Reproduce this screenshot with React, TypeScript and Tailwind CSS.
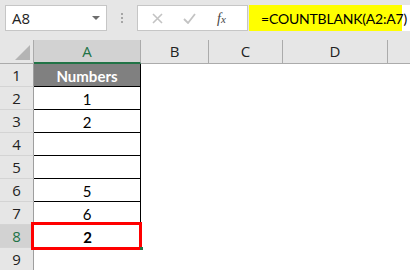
import React from 'react';

const rows = [
  { n: 1, v: 'Numbers', head: true },
  { n: 2, v: '1' },
  { n: 3, v: '2' },
  { n: 4, v: '' },
  { n: 5, v: '' },
  { n: 6, v: '5' },
  { n: 7, v: '6' },
];

const uiFont = { fontFamily: '"Open Sans", "Noto Sans", sans-serif' };
const cellFont = { fontFamily: 'Lato, "Liberation Sans", sans-serif' };

function RowHeader({ n, selected }: { n: number; selected?: boolean }) {
  return (
    <div
      className={`w-[34px] h-full flex items-center justify-center border-r border-b border-r-[#9e9e9e] border-b-[#d4d4d4] text-[15px] ${
        selected ? 'bg-[#d2d2d2] text-[#217346]' : 'bg-[#e6e6e6] text-[#222]'
      }`}
      style={uiFont}
    >
      {n}
    </div>
  );
}

export default function App() {
  return (
    <div className="w-[410px] h-[270px] overflow-hidden bg-white">
      {/* Formula bar */}
      <div className="h-[40px] bg-[#e6e6e6] flex items-start pt-[5px] pl-[5px]">
        <div className="w-[102px] h-[26px] bg-white border border-[#c6c6c6] flex items-center justify-between pl-[6px] pr-[6px]">
          <span className="text-[15px] text-[#222]" style={uiFont}>A8</span>
          <svg width="8" height="4" viewBox="0 0 8 4">
            <polygon points="0,0 8,0 4,4" fill="#6d6d6d" />
          </svg>
        </div>
        <div className="w-[30px] h-[26px] flex flex-col items-center justify-center gap-[2px]">
          <div className="w-[2px] h-[2px] bg-[#a6a6a6]" />
          <div className="w-[2px] h-[2px] bg-[#a6a6a6]" />
          <div className="w-[2px] h-[2px] bg-[#a6a6a6]" />
        </div>
        <div className="w-[111px] h-[26px] bg-white border border-[#c6c6c6] flex items-center pl-[14px]">
          <svg width="11" height="11" viewBox="0 0 11 11">
            <path d="M1 1L10 10M10 1L1 10" stroke="#c3c3c3" strokeWidth="1.6" />
          </svg>
          <svg width="13" height="11" viewBox="0 0 13 11" className="ml-[20px]">
            <path d="M1 6L5 10L12 1" stroke="#c3c3c3" strokeWidth="1.8" fill="none" />
          </svg>
          <span
            className="ml-[21px] text-[14px] italic text-[#444]"
            style={{ fontFamily: '"Liberation Serif", serif' }}
          >
            f<span className="text-[11px]">x</span>
          </span>
        </div>
        <div className="ml-[1px] flex-1 h-[26px] bg-white">
          <div
            className="w-[153px] h-full bg-[#ffff00] flex items-center pl-[12px] text-[14px] tracking-[-0.2px] whitespace-nowrap text-black"
            style={cellFont}
          >
            =COUNTBLANK(A2:A7)
          </div>
        </div>
      </div>

      {/* Column headers */}
      <div className="h-[24px] flex bg-[#e6e6e6] text-[15px] text-[#222]" style={uiFont}>
        <div className="w-[34px] h-full border-r border-b border-[#ababab] relative">
          <svg width="34" height="23" viewBox="0 0 34 23" className="absolute left-0 top-0">
            <polygon points="30,5 30,20 15,20" fill="#b4b4b4" />
          </svg>
        </div>
        <div className="w-[107px] h-full bg-[#d2d2d2] border-r border-r-[#ababab] border-b-2 border-b-[#217346] flex items-center justify-center text-[#217346]">
          A
        </div>
        <div className="w-[68px] h-full border-r border-b border-[#ababab] flex items-center justify-center">B</div>
        <div className="w-[74px] h-full border-r border-b border-[#ababab] flex items-center justify-center">C</div>
        <div className="w-[105px] h-full border-r border-b border-[#ababab] flex items-center justify-center">D</div>
        <div className="flex-1 h-full border-b border-[#ababab]" />
      </div>

      {/* Data rows */}
      {rows.map((r) => (
        <div key={r.n} className="h-[23px] flex">
          <RowHeader n={r.n} />
          <div
            className={`w-[107px] h-full border-r border-b border-black flex items-center justify-center pt-[2px] text-[15px] ${
              r.head ? 'bg-[#808080] text-white font-bold' : 'text-black'
            }`}
            style={cellFont}
          >
            {r.v}
          </div>
        </div>
      ))}

      {/* Selected row 8 */}
      <div className="h-[23px] flex">
        <RowHeader n={8} selected />
        <div className="relative w-[107px] h-full flex items-center justify-center pt-[2px] text-[15px] font-bold text-black" style={cellFont}>
          2
          <div className="absolute left-[-3px] top-[-3px] w-[111px] h-[28px] border-[3px] border-[#ff0000]" />
          <div className="absolute right-[-2px] bottom-[-2px] w-[3px] h-[3px] bg-[#217346]" />
        </div>
      </div>

      <div className="h-[23px] flex">
        <RowHeader n={9} />
      </div>
    </div>
  );
}
